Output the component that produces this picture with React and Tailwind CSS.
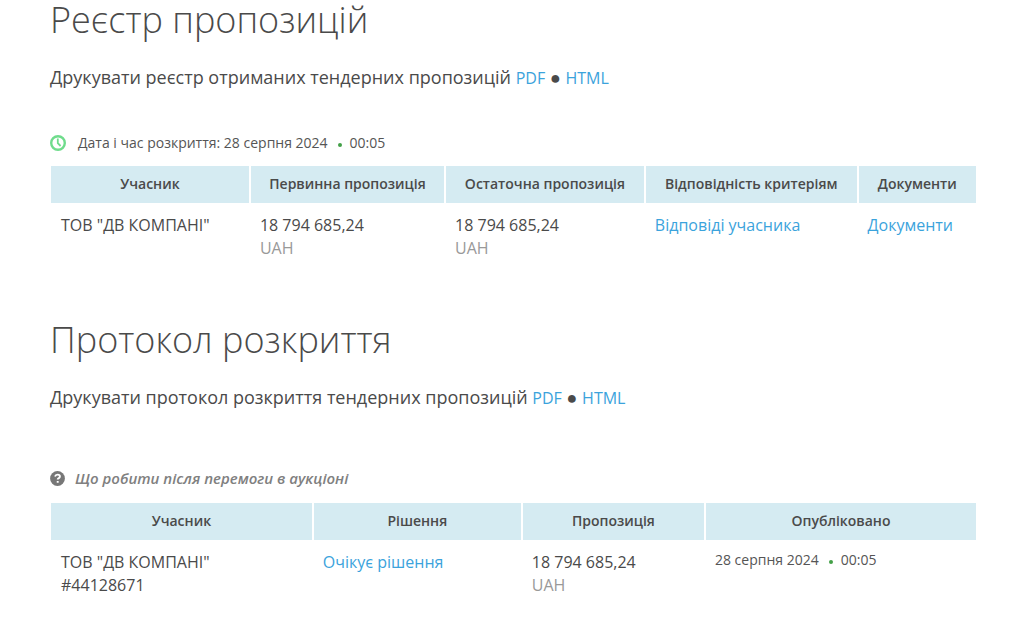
function FormatLinks() {
  return (
    <>
      <a href="#pdf" className="text-base text-[#3ba3dc] hover:underline">
        PDF
      </a>{" "}
      <span>●</span>{" "}
      <a href="#html" className="text-base text-[#3ba3dc] hover:underline">
        HTML
      </a>
    </>
  );
}

function DateTime({ date, time }) {
  return (
    <span className="inline-flex items-center text-sm text-[#555]">
      {date}
      <span className="mt-1 mr-2 ml-2.5 size-1 rounded-full bg-[#43a047]" />
      {time}
    </span>
  );
}

function HeadCell({ children, className = "" }) {
  return (
    <th
      scope="col"
      className={`h-[37px] border-r-2 border-white bg-[#d5ebf2] px-2 pb-0.5 text-sm font-semibold last:border-r-0 ${className}`}
    >
      {children}
    </th>
  );
}

function Price() {
  return (
    <>
      18 794 685,24
      <div className="text-[#999]">UAH</div>
    </>
  );
}

function BidsTable() {
  return (
    <table className="w-full table-fixed border-collapse text-base leading-[23px]">
      <thead>
        <tr>
          <HeadCell className="w-[21.5%]">Учасник</HeadCell>
          <HeadCell className="w-[21.1%]">Первинна пропозиція</HeadCell>
          <HeadCell className="w-[21.6%]">Остаточна пропозиція</HeadCell>
          <HeadCell className="w-[23%]">Відповідність критеріям</HeadCell>
          <HeadCell>Документи</HeadCell>
        </tr>
      </thead>
      <tbody>
        <tr className="align-top">
          <td className="px-2.5 pt-[11px]">ТОВ "ДВ КОМПАНІ"</td>
          <td className="px-2.5 pt-[11px]">
            <Price />
          </td>
          <td className="px-2.5 pt-[11px]">
            <Price />
          </td>
          <td className="px-2.5 pt-[11px]">
            <a href="#answers" className="text-[#3ba3dc] hover:underline">
              Відповіді учасника
            </a>
          </td>
          <td className="px-2.5 pt-[11px]">
            <a href="#documents" className="text-[#3ba3dc] hover:underline">
              Документи
            </a>
          </td>
        </tr>
      </tbody>
    </table>
  );
}

function AwardsTable() {
  return (
    <table className="w-full table-fixed border-collapse text-base leading-[23px]">
      <thead>
        <tr>
          <HeadCell className="w-[28.3%]">Учасник</HeadCell>
          <HeadCell className="w-[22.6%]">Рішення</HeadCell>
          <HeadCell className="w-[19.8%]">Пропозиція</HeadCell>
          <HeadCell>Опубліковано</HeadCell>
        </tr>
      </thead>
      <tbody>
        <tr className="align-top">
          <td className="px-2.5 pt-[11px]">
            ТОВ "ДВ КОМПАНІ"
            <div>#44128671</div>
          </td>
          <td className="px-2.5 pt-[11px]">
            <a href="#decision" className="text-[#3ba3dc] hover:underline">
              Очікує рішення
            </a>
          </td>
          <td className="px-2.5 pt-[11px]">
            <Price />
          </td>
          <td className="px-2.5 pt-2">
            <DateTime date="28 серпня 2024" time="00:05" />
          </td>
        </tr>
      </tbody>
    </table>
  );
}

export default function App() {
  return (
    <main className="bg-white pr-12 pl-[50px] font-['Open_Sans',sans-serif] text-[#4a4a4a]">
      <section>
        <h1 className="text-4xl leading-10 font-light">Реєстр пропозицій</h1>
        <p className="mt-[23px] text-lg leading-7">
          Друкувати реєстр отриманих тендерних пропозицій <FormatLinks />
        </p>
        <div className="mt-[42px] mb-[13px] flex h-5 items-center gap-3">
          <svg viewBox="0 0 16 16" className="size-4" fill="none" stroke="#6fdc8c" strokeWidth="2.4">
            <circle cx="8" cy="8" r="6.8" />
            <path d="M7.8 3.6v4.6l2.8 2.8" strokeWidth="1.8" />
          </svg>
          <DateTime date="Дата і час розкриття: 28 серпня 2024" time="00:05" />
        </div>
        <div className="pl-px">
          <BidsTable />
        </div>
      </section>

      <section className="mt-[60px]">
        <h2 className="text-4xl leading-10 font-light">Протокол розкриття</h2>
        <p className="mt-[23px] text-lg leading-7">
          Друкувати протокол розкриття тендерних пропозицій <FormatLinks />
        </p>
        <div className="mt-[55px] mb-[13px] flex h-6 items-center gap-2.5">
          <svg viewBox="0 0 15 15" className="size-[15px]">
            <circle cx="7.5" cy="7.5" r="7.4" fill="#777" />
            <path
              d="M5 5.6q.6-2 2.6-2 2.3 0 2.3 1.9 0 1-1.1 1.6-1.1.6-1.1 1.5M7.7 9.9v1.9"
              fill="none"
              stroke="#fff"
              strokeWidth="1.9"
            />
          </svg>
          <a href="#help" className="text-[15px] font-semibold text-[#808080] italic">
            Що робити після перемоги в аукціоні
          </a>
        </div>
        <div className="pl-px">
          <AwardsTable />
        </div>
      </section>
    </main>
  );
}
